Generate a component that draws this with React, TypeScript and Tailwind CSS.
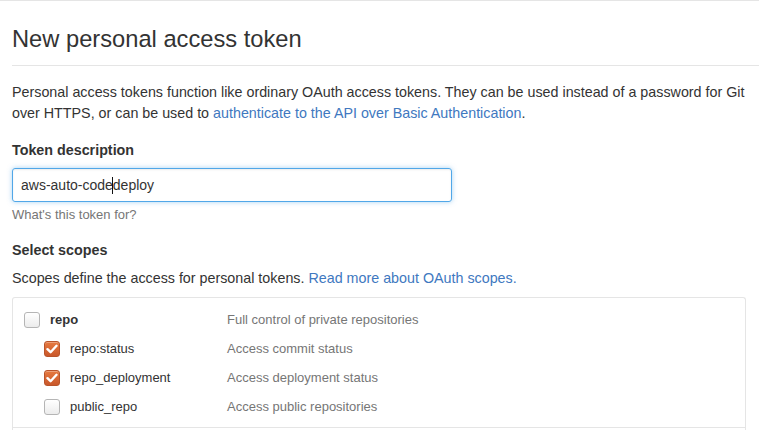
import React from "react";

function Box({ checked }: { checked: boolean }) {
  if (checked) {
    return (
      <span className="flex h-[16px] w-[16px] items-center justify-center rounded-[3px] border border-[#b9542b] bg-gradient-to-b from-[#e6793f] to-[#c9582b] shadow-[inset_0_1px_0_rgba(255,255,255,0.3)]">
        <svg width="12" height="10" viewBox="0 0 12 10">
          <path d="M1.5 5.2 L4.6 8.2 L10.5 1.8" fill="none" stroke="#fff" strokeWidth="2.4" strokeLinecap="round" strokeLinejoin="round" />
        </svg>
      </span>
    );
  }
  return (
    <span className="block h-[16px] w-[16px] rounded-[3px] border border-[#b5b5b5] bg-gradient-to-b from-[#ffffff] to-[#ececec]" />
  );
}

function Row({ name, desc, checked, child, bold }: { name: string; desc: string; checked: boolean; child?: boolean; bold?: boolean }) {
  return (
    <div className="flex h-[29px] items-center">
      <div className={child ? "flex w-[203px] items-center pl-[20px]" : "flex w-[203px] items-center"}>
        <Box checked={checked} />
        <span className={bold ? "ml-[10px] text-[13px] font-bold text-[#333]" : "ml-[10px] text-[13px] text-[#333]"}>{name}</span>
      </div>
      <span className="text-[13px] text-[#767676]">{desc}</span>
    </div>
  );
}

export default function App() {
  return (
    <div className="min-h-[430px] w-[759px] overflow-hidden border-t border-[#e5e5e5] bg-white text-[14.3px] leading-[21px] text-[#333]" style={{ fontFamily: '"Liberation Sans", Arial, Helvetica, sans-serif' }}>
      <div className="pl-[12px]">
        <div className="border-b border-[#e5e5e5] pt-[23px] pb-[10px]">
          <h1 className="text-[23.7px] font-normal leading-[31px] text-[#333]">New personal access token</h1>
        </div>
      </div>
      <div className="px-[12px] pt-[16px]">
        <p className="w-[740px]">
          Personal access tokens function like ordinary OAuth access tokens. They can be used instead of a password for Git over HTTPS, or can be used to{" "}
          <a className="text-[#4078c0]">authenticate to the API over Basic Authentication</a>.
        </p>
        <div className="mt-[16px] font-bold">Token description</div>
        <div className="mt-[7px] flex h-[34px] w-[440px] items-center rounded-[3px] border border-[#51a7e8] px-[8px] text-[14px] shadow-[0_0_5px_rgba(81,167,232,0.5),inset_0_1px_2px_rgba(0,0,0,0.075)]">
          <span>aws-auto-code</span>
          <span className="mx-[-0.5px] inline-block h-[17px] w-[1px] bg-[#111]" />
          <span>deploy</span>
        </div>
        <div className="mt-[4px] text-[13px] leading-[18px] text-[#767676]">What's this token for?</div>
        <div className="mt-[16px] font-bold">Select scopes</div>
        <div className="mt-[7px]">
          Scopes define the access for personal tokens.{" "}
          <a className="text-[#4078c0]">Read more about OAuth scopes.</a>
        </div>
        <div className="mt-[8px] w-[734px] rounded-t-[3px] border border-b-0 border-[#e5e5e5]">
          <div className="border-b border-[#e5e5e5] pt-[7px] pb-[6px] pl-[11px]">
            <Row name="repo" desc="Full control of private repositories" checked={false} bold />
            <Row name="repo:status" desc="Access commit status" checked child />
            <Row name="repo_deployment" desc="Access deployment status" checked child />
            <Row name="public_repo" desc="Access public repositories" checked={false} child />
          </div>
          <div className="h-[20px]" />
        </div>
      </div>
    </div>
  );
}
